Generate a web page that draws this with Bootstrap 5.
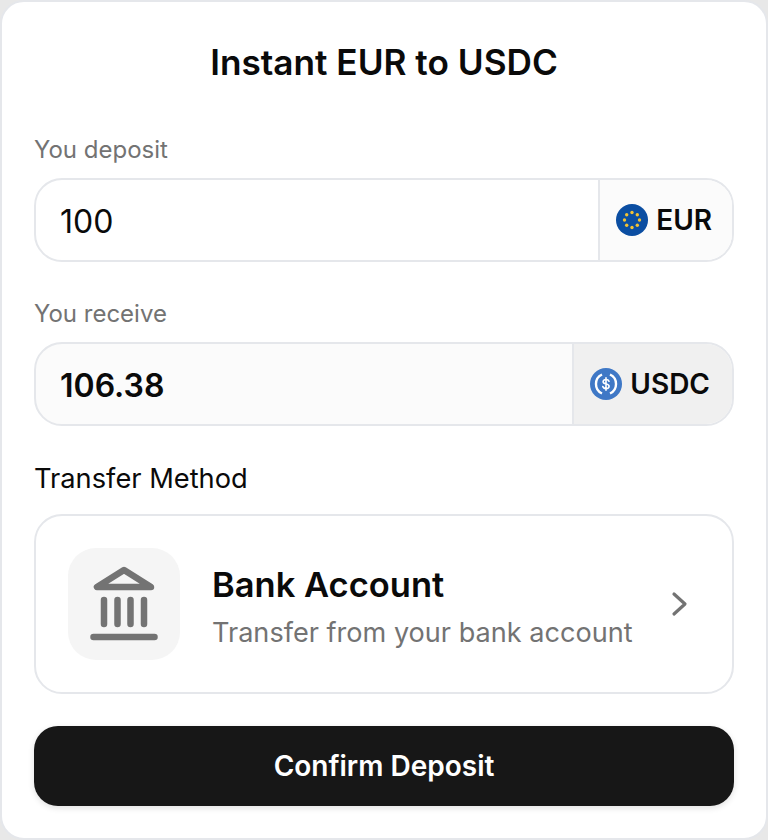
<!DOCTYPE html>
<html lang="en">
<head>
<meta charset="utf-8">
<title>Instant EUR to USDC</title>
<link href="https://cdn.jsdelivr.net/npm/bootstrap@5.3.0/dist/css/bootstrap.min.css" rel="stylesheet">
<style>
html,body{height:100%;margin:0;background:#e8e8e8;}
body{font-family:Inter,"Liberation Sans",sans-serif;color:#0a0a0a;overflow:hidden;}
.shell{width:768px;height:840px;background:#fff;border:2px solid #e5e7eb;border-radius:24px;padding:32px 32px 30px;}
.ttl{font-size:35.2px;font-weight:600;line-height:56px;height:56px;margin:0 0 44px;text-align:center;color:#0a0a0a;}
.lbl{font-size:24px;line-height:32px;color:#737373;margin:0 0 12px;height:32px;}
.fieldbox{height:84px;border:2px solid #e5e7eb;border-radius:28px;overflow:hidden;margin-bottom:36px;}
.fieldbox.ro{background:#fbfbfb;margin-bottom:32px;}
.amt{font-size:32px;line-height:40px;padding-left:24px;padding-top:3px;color:#0a0a0a;}
.amt-strong{font-weight:600;}
.cur{gap:8px;font-size:28px;font-weight:600;border-left:2px solid #e5e7eb;background:#fbfbfb;padding:0 20px 0 16px;}
.ro .cur{background:#f0f0f0;padding:0 22px 0 16px;}
.method-lbl{line-height:42px;margin:0 0 16px;color:#0a0a0a;height:40px;font-size:27.25px;}
.method{height:180px;border:2px solid #e5e7eb;border-radius:28px;padding:0 44px 0 32px;margin-bottom:32px;}
.tile{width:112px;height:112px;border-radius:28px;background:#f5f5f5;margin-right:32px;flex:none;}
.m-text{padding-top:7px;}
.m-name{font-size:34.5px;font-weight:600;line-height:44px;}
.m-sub{font-size:27.1px;line-height:40px;color:#737373;margin-top:6px;}
.go{height:80px;width:100%;border:0;background:#171717;color:#fff;border-radius:24px;font-size:28px;font-weight:600;box-shadow:0 2px 6px rgba(0,0,0,.12);}
.go:hover,.go:active{background:#171717!important;color:#fff!important;}
</style>
</head>
<body>
<div class="shell">
  <h1 class="ttl">Instant EUR to USDC</h1>
  <div class="lbl">You deposit</div>
  <div class="fieldbox d-flex align-items-stretch">
    <div class="amt flex-grow-1 d-flex align-items-center">100</div>
    <div class="cur d-flex align-items-center">
      <svg width="32" height="32" viewBox="0 0 32 32" aria-hidden="true"><circle cx="16" cy="16" r="16" fill="#0b4ea2"/><g fill="#f2c233"><circle cx="16" cy="8.5" r="1.7"/><circle cx="21.300" cy="10.700" r="1.7"/><circle cx="23.500" cy="16" r="1.7"/><circle cx="21.300" cy="21.300" r="1.7"/><circle cx="16" cy="23.500" r="1.7"/><circle cx="10.700" cy="21.300" r="1.7"/><circle cx="8.500" cy="16" r="1.7"/><circle cx="10.700" cy="10.700" r="1.7"/></g></svg>
      <span>EUR</span>
    </div>
  </div>
  <div class="lbl">You receive</div>
  <div class="fieldbox ro d-flex align-items-stretch">
    <div class="amt amt-strong flex-grow-1 d-flex align-items-center">106.38</div>
    <div class="cur d-flex align-items-center">
      <svg width="32" height="32" viewBox="0 0 32 32" aria-hidden="true"><circle cx="16" cy="16" r="16" fill="#3f78c6"/><g fill="none" stroke="#fff" stroke-width="2.400"><path d="M12 6.500a10.500 10.500 0 0 0 0 19"/><path d="M20 6.500a10.500 10.500 0 0 1 0 19"/></g><path d="M19 13.300c-.4-1.100-1.500-1.800-3-1.800-1.700 0-2.900.8-2.900 2.200 0 3.200 6 1.400 6 4.500 0 1.400-1.300 2.300-3.100 2.300-1.600 0-2.800-.7-3.200-2M16 9.800v12.400" fill="none" stroke="#fff" stroke-width="1.600" stroke-linecap="round"/></svg>
      <span>USDC</span>
    </div>
  </div>
  <div class="method-lbl">Transfer Method</div>
  <div class="method d-flex align-items-center">
    <div class="tile d-flex align-items-center justify-content-center">
      <svg width="68" height="76" viewBox="0 0 68 76" aria-hidden="true"><g fill="none" stroke="#737373" stroke-linecap="round" stroke-linejoin="round"><path d="M34 4 7 21h54z" stroke-width="6.500"/><path d="M14 34v24M27.500 34v24M40.500 34v24M54 34v24" stroke-width="6.500"/><path d="M3.500 71h61" stroke-width="6.500"/></g></svg>
    </div>
    <div class="flex-grow-1 m-text">
      <div class="m-name">Bank Account</div>
      <div class="m-sub">Transfer from your bank account</div>
    </div>
    <svg width="18" height="26" viewBox="0 0 18 26" aria-hidden="true"><path d="M4 3l11 10L4 23" fill="none" stroke="#737373" stroke-width="3.200" stroke-linecap="round" stroke-linejoin="round"/></svg>
  </div>
  <button type="button" class="btn go">Confirm Deposit</button>
</div>
</body>
</html>
